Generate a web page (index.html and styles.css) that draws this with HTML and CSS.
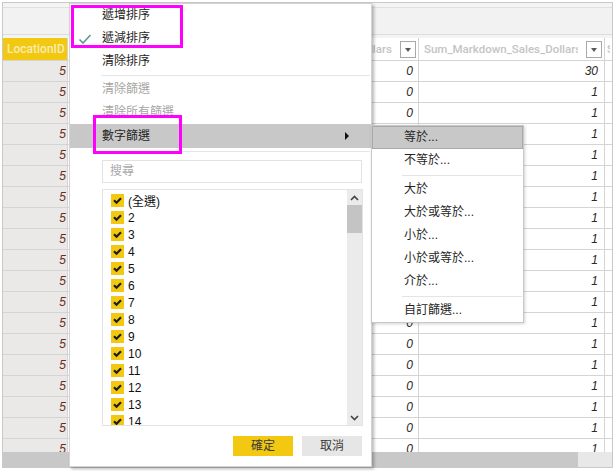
FILE: index.html
```html
<!DOCTYPE html>
<html lang="zh-Hant">
<head>
<meta charset="utf-8">
<title>數字篩選</title>
<link rel="stylesheet" href="styles.css">
</head>
<body>
<div class="app">
  <div class="toolbar"><div class="toolbar-inner"></div></div>
  <div class="grid">
    <div class="row head">
      <div class="cell c1 hy"><span>LocationID</span></div>
      <div class="cell c2 hd"><span class="ht right">Sum_Regular_Sales_Dollars</span><span class="dd"></span></div>
      <div class="cell c3 hd"><span class="ht">Sum_Markdown_Sales_Dollars</span><span class="dd"></span></div>
      <div class="cell c4 hd"><span class="ht">S</span></div>
    </div>
    <div class="row"><div class="cell c1 num">5</div><div class="cell c2 num">0</div><div class="cell c3 num">30</div><div class="cell c4"></div></div>
    <div class="row"><div class="cell c1 num">5</div><div class="cell c2 num">0</div><div class="cell c3 num">1</div><div class="cell c4"></div></div>
    <div class="row"><div class="cell c1 num">5</div><div class="cell c2 num">0</div><div class="cell c3 num">1</div><div class="cell c4"></div></div>
    <div class="row"><div class="cell c1 num">5</div><div class="cell c2 num">0</div><div class="cell c3 num">1</div><div class="cell c4"></div></div>
    <div class="row"><div class="cell c1 num">5</div><div class="cell c2 num">0</div><div class="cell c3 num">1</div><div class="cell c4"></div></div>
    <div class="row"><div class="cell c1 num">5</div><div class="cell c2 num">0</div><div class="cell c3 num">1</div><div class="cell c4"></div></div>
    <div class="row"><div class="cell c1 num">5</div><div class="cell c2 num">0</div><div class="cell c3 num">1</div><div class="cell c4"></div></div>
    <div class="row"><div class="cell c1 num">5</div><div class="cell c2 num">0</div><div class="cell c3 num">1</div><div class="cell c4"></div></div>
    <div class="row"><div class="cell c1 num">5</div><div class="cell c2 num">0</div><div class="cell c3 num">1</div><div class="cell c4"></div></div>
    <div class="row"><div class="cell c1 num">5</div><div class="cell c2 num">0</div><div class="cell c3 num">1</div><div class="cell c4"></div></div>
    <div class="row"><div class="cell c1 num">5</div><div class="cell c2 num">0</div><div class="cell c3 num">1</div><div class="cell c4"></div></div>
    <div class="row"><div class="cell c1 num">5</div><div class="cell c2 num">0</div><div class="cell c3 num">1</div><div class="cell c4"></div></div>
    <div class="row"><div class="cell c1 num">5</div><div class="cell c2 num">0</div><div class="cell c3 num">1</div><div class="cell c4"></div></div>
    <div class="row"><div class="cell c1 num">5</div><div class="cell c2 num">0</div><div class="cell c3 num">1</div><div class="cell c4"></div></div>
    <div class="row"><div class="cell c1 num">5</div><div class="cell c2 num">0</div><div class="cell c3 num">1</div><div class="cell c4"></div></div>
    <div class="row"><div class="cell c1 num">5</div><div class="cell c2 num">0</div><div class="cell c3 num">1</div><div class="cell c4"></div></div>
    <div class="row"><div class="cell c1 num">5</div><div class="cell c2 num">0</div><div class="cell c3 num">1</div><div class="cell c4"></div></div>
    <div class="row"><div class="cell c1 num">5</div><div class="cell c2 num">0</div><div class="cell c3 num">1</div><div class="cell c4"></div></div>
    <div class="row"><div class="cell c1 num">5</div><div class="cell c2 num">0</div><div class="cell c3 num">1</div><div class="cell c4"></div></div>
  </div>
  <div class="hscroll"><div class="hthumb"></div></div>
</div>

<div class="menu">
  <div class="mi">遞增排序</div>
  <div class="mi checked">
    <svg class="tick" width="14" height="12" viewBox="0 0 14 12"><path d="M1.5 6.5 L5 10 L12.5 2" fill="none" stroke="#5c9f90" stroke-width="1.7"/></svg>
    遞減排序
  </div>
  <div class="mi">清除排序</div>
  <div class="sep s1"></div>
  <div class="mi dis">清除篩選</div>
  <div class="mi dis">清除所有篩選</div>
  <div class="mi hl">數字篩選<span class="arrow"></span></div>
  <div class="sep s2"></div>
  <div class="search">搜尋</div>
  <div class="list">
    <div class="items">
      <div class="li"><span class="cb"><svg width="13" height="13" viewBox="0 0 13 13"><path d="M3 6.3 L5.5 8.8 L10 4.3" fill="none" stroke="#1d1d1d" stroke-width="2.2"/></svg></span>(全選)</div>
      <div class="li"><span class="cb"><svg width="13" height="13" viewBox="0 0 13 13"><path d="M3 6.3 L5.5 8.8 L10 4.3" fill="none" stroke="#1d1d1d" stroke-width="2.2"/></svg></span>2</div>
      <div class="li"><span class="cb"><svg width="13" height="13" viewBox="0 0 13 13"><path d="M3 6.3 L5.5 8.8 L10 4.3" fill="none" stroke="#1d1d1d" stroke-width="2.2"/></svg></span>3</div>
      <div class="li"><span class="cb"><svg width="13" height="13" viewBox="0 0 13 13"><path d="M3 6.3 L5.5 8.8 L10 4.3" fill="none" stroke="#1d1d1d" stroke-width="2.2"/></svg></span>4</div>
      <div class="li"><span class="cb"><svg width="13" height="13" viewBox="0 0 13 13"><path d="M3 6.3 L5.5 8.8 L10 4.3" fill="none" stroke="#1d1d1d" stroke-width="2.2"/></svg></span>5</div>
      <div class="li"><span class="cb"><svg width="13" height="13" viewBox="0 0 13 13"><path d="M3 6.3 L5.5 8.8 L10 4.3" fill="none" stroke="#1d1d1d" stroke-width="2.2"/></svg></span>6</div>
      <div class="li"><span class="cb"><svg width="13" height="13" viewBox="0 0 13 13"><path d="M3 6.3 L5.5 8.8 L10 4.3" fill="none" stroke="#1d1d1d" stroke-width="2.2"/></svg></span>7</div>
      <div class="li"><span class="cb"><svg width="13" height="13" viewBox="0 0 13 13"><path d="M3 6.3 L5.5 8.8 L10 4.3" fill="none" stroke="#1d1d1d" stroke-width="2.2"/></svg></span>8</div>
      <div class="li"><span class="cb"><svg width="13" height="13" viewBox="0 0 13 13"><path d="M3 6.3 L5.5 8.8 L10 4.3" fill="none" stroke="#1d1d1d" stroke-width="2.2"/></svg></span>9</div>
      <div class="li"><span class="cb"><svg width="13" height="13" viewBox="0 0 13 13"><path d="M3 6.3 L5.5 8.8 L10 4.3" fill="none" stroke="#1d1d1d" stroke-width="2.2"/></svg></span>10</div>
      <div class="li"><span class="cb"><svg width="13" height="13" viewBox="0 0 13 13"><path d="M3 6.3 L5.5 8.8 L10 4.3" fill="none" stroke="#1d1d1d" stroke-width="2.2"/></svg></span>11</div>
      <div class="li"><span class="cb"><svg width="13" height="13" viewBox="0 0 13 13"><path d="M3 6.3 L5.5 8.8 L10 4.3" fill="none" stroke="#1d1d1d" stroke-width="2.2"/></svg></span>12</div>
      <div class="li"><span class="cb"><svg width="13" height="13" viewBox="0 0 13 13"><path d="M3 6.3 L5.5 8.8 L10 4.3" fill="none" stroke="#1d1d1d" stroke-width="2.2"/></svg></span>13</div>
      <div class="li"><span class="cb"><svg width="13" height="13" viewBox="0 0 13 13"><path d="M3 6.3 L5.5 8.8 L10 4.3" fill="none" stroke="#1d1d1d" stroke-width="2.2"/></svg></span>14</div>
    </div>
    <div class="vscroll">
      <div class="vbtn"><svg width="9" height="6" viewBox="0 0 9 6"><path d="M1 5 L4.5 1.5 L8 5" fill="none" stroke="#444" stroke-width="1.6"/></svg></div>
      <div class="vthumb"></div>
      <div class="vtrack"></div>
      <div class="vbtn"><svg width="9" height="6" viewBox="0 0 9 6"><path d="M1 1 L4.5 4.5 L8 1" fill="none" stroke="#444" stroke-width="1.6"/></svg></div>
    </div>
  </div>
  <div class="buttons">
    <div class="btn ok">確定</div>
    <div class="btn cancel">取消</div>
  </div>
</div>

<div class="submenu">
  <div class="si active">等於...</div>
  <div class="si">不等於...</div>
  <div class="ssep"></div>
  <div class="si">大於</div>
  <div class="si">大於或等於...</div>
  <div class="si">小於...</div>
  <div class="si">小於或等於...</div>
  <div class="si">介於...</div>
  <div class="ssep"></div>
  <div class="si">自訂篩選...</div>
</div>

<div class="mark m1"></div>
<div class="mark m2"></div>
</body>
</html>
```

FILE: styles.css
```css
* { box-sizing: border-box; }

html, body {
  margin: 0;
  padding: 0;
}

body {
  width: 614px;
  height: 471px;
  overflow: hidden;
  background: #ffffff;
  font-family: "Liberation Sans", "Noto Sans CJK TC", sans-serif;
  font-size: 12px;
  color: #201f1e;
  position: relative;
}

/* ---------- underlying table ---------- */
.app {
  margin: 2px 1px 0 2px;
  width: 611px;
  height: 466px;
  border: 1px solid #c9c9c9;
  display: flex;
  flex-direction: column;
  background: #fff;
}

.toolbar {
  height: 35px;
  background: #f4f4f4;
  padding-top: 4px;
  flex: none;
}

.toolbar-inner {
  height: 28px;
  border-top: 1px solid #e0e0e0;
  border-bottom: 1px solid #dcdcdc;
  background: #f2f2f2;
}

.grid {
  height: 414px;
  overflow: hidden;
  flex: none;
}

.row {
  display: grid;
  grid-template-columns: 65px 351px 186px 1fr;
  height: 21px;
}

.row.head {
  height: 23px;
}

.cell {
  border-right: 1px solid #d4d4d4;
  border-bottom: 1px solid #d4d4d4;
  overflow: hidden;
  white-space: nowrap;
}

.c1 { background: #ebe9e7; }
.c4 { border-right: none; }

.num {
  font-style: italic;
  text-align: right;
  line-height: 20px;
  color: #2d2a26;
}

.c1.num {
  padding-right: 1px;
  color: #6b2a1f;
}
.c2.num { padding-right: 5px; }
.c3.num { padding-right: 6px; }

.hy {
  background: #f2c811;
  color: #f9ecb5;
  font-family: Roboto, "Liberation Sans", sans-serif;
  font-weight: 500;
  font-size: 12px;
  padding-left: 4px;
  line-height: 22px;
}

.hd {
  display: flex;
  align-items: center;
  padding: 0 2px 0 5px;
  background: #fff;
}

.c4.hd { padding-left: 2px; }

.ht {
  flex: 1;
  overflow: hidden;
  color: #c4c4c4;
  font-family: Roboto, "Liberation Sans", sans-serif;
  font-weight: 500;
  font-size: 11.5px;
  white-space: nowrap;
}

.ht.right {
  text-align: right;
  margin-right: 8px;
}

.c3 .ht { margin-right: 8px; }

.dd {
  width: 16px;
  height: 17px;
  border: 1px solid #a9a9a9;
  background: #fff;
  flex: none;
  position: relative;
}

.dd::after {
  content: "";
  position: absolute;
  left: 4px;
  top: 6px;
  border-left: 3.5px solid transparent;
  border-right: 3.5px solid transparent;
  border-top: 4px solid #5a5a5a;
}

.hscroll {
  height: 15px;
  background: #e8e8e8;
  flex: none;
  display: flex;
}

.hthumb {
  width: 575px;
  background: #c8c8c8;
}

/* ---------- context menu ---------- */
.menu {
  position: absolute;
  left: 69px;
  top: 3px;
  width: 303px;
  height: 464px;
  background: #fff;
  border: 1px solid #d3d3d3;
  box-shadow: 2px 2px 3px rgba(0, 0, 0, 0.28);
  display: flex;
  flex-direction: column;
}

.mi {
  height: 23px;
  line-height: 23px;
  padding-left: 32px;
  color: #252423;
  position: relative;
  flex: none;
}

.mi.dis { color: #a8a6a4; }

.tick {
  position: absolute;
  left: 8px;
  top: 6px;
}

.mi.hl {
  background: #c8c8c8;
  height: 24px;
  line-height: 24px;
}

.arrow {
  position: absolute;
  left: 275px;
  top: 8px;
  border-top: 4px solid transparent;
  border-bottom: 4px solid transparent;
  border-left: 4px solid #111;
}

.sep {
  flex: none;
  margin-left: 31px;
  margin-right: 1px;
  border-top: 1px solid #e6e6e6;
}

.sep.s1 { margin-top: 2px; margin-bottom: 2px; }
.sep.s2 { margin-top: 3px; margin-bottom: 8px; }

.search {
  flex: none;
  margin-left: 32px;
  width: 260px;
  height: 23px;
  border: 1px solid #e2e2e2;
  color: #a9a9a9;
  line-height: 21px;
  padding-left: 7px;
}

.list {
  flex: none;
  margin-top: 6px;
  margin-left: 32px;
  width: 261px;
  height: 237px;
  border: 1px solid #e3e3e3;
  position: relative;
  overflow: hidden;
}

.items {
  padding-top: 2px;
  padding-left: 8px;
}

.li {
  height: 17px;
  display: flex;
  align-items: center;
  gap: 4px;
  color: #111;
  font-size: 12px;
}

.cb {
  width: 13px;
  height: 13px;
  background: #f2c811;
  display: block;
  flex: none;
}

.cb svg { display: block; }

.vscroll {
  position: absolute;
  right: 0;
  top: 0;
  bottom: 0;
  width: 15px;
  background: #ebebeb;
  display: flex;
  flex-direction: column;
}

.vbtn {
  height: 15px;
  display: flex;
  align-items: center;
  justify-content: center;
  flex: none;
}

.vbtn svg { display: block; }

.vthumb {
  height: 28px;
  background: #c4c4c4;
  flex: none;
}

.vtrack { flex: 1; }

.buttons {
  flex: none;
  margin-top: 10px;
  display: flex;
  justify-content: flex-end;
  gap: 9px;
  padding-right: 9px;
}

.btn {
  width: 60px;
  height: 20px;
  line-height: 20px;
  text-align: center;
  color: #3b3a39;
}

.btn.ok { background: #f2c811; }
.btn.cancel { background: #e6e6e6; }

/* ---------- submenu ---------- */
.submenu {
  position: absolute;
  left: 371px;
  top: 125px;
  width: 153px;
  height: 198px;
  background: #fff;
  border: 1px solid #c8c8c8;
  box-shadow: 1px 1px 3px rgba(0, 0, 0, 0.18);
}

.si {
  height: 23px;
  line-height: 23px;
  padding-left: 32px;
  color: #252423;
}

.si.active {
  background: #c8c8c8;
  border: 1px solid #a9a9a9;
  line-height: 21px;
  padding-left: 31px;
}

.ssep {
  margin: 3px 1px 2px 30px;
  border-top: 1px solid #e4e4e4;
}

/* ---------- annotation boxes ---------- */
.mark {
  position: absolute;
  border: 3px solid #ff00ff;
}

.m1 {
  left: 71px;
  top: 5px;
  width: 112px;
  height: 43px;
}

.m2 {
  left: 93px;
  top: 115px;
  width: 89px;
  height: 39px;
}
```
